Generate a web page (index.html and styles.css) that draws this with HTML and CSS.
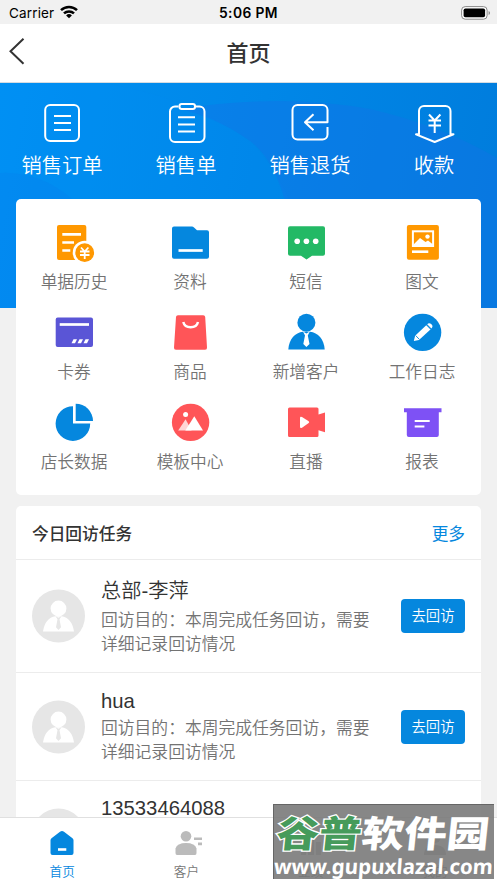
FILE: index.html
```html
<!DOCTYPE html>
<html lang="zh-CN">
<head>
<meta charset="utf-8">
<title>首页</title>
<link rel="stylesheet" href="styles.css">
</head>
<body>
<div class="screen">
  <div class="status">
    <div class="carrier">Carrier
      <svg width="18" height="14" viewBox="0 0 18 14" fill="none" stroke="#000" stroke-width="2.5"><path d="M1 5.2a11.6 11.6 0 0 1 16 0M4 8.4a7.2 7.2 0 0 1 10 0"/><path d="M9 13.3 6.1 10.5a4.2 4.2 0 0 1 5.8 0z" fill="#000" stroke="none"/></svg>
    </div>
    <div class="clock">5:06 PM</div>
    <svg class="battery" width="30" height="14" viewBox="0 0 30 14"><rect x=".6" y=".6" width="25.5" height="12.6" rx="3.6" fill="#fff" stroke="#888"/><rect x="2.6" y="2.5" width="21.5" height="8.8" rx="1.8"/><path d="M27.6 5v4q1.4-.5 1.400-2t-1.400-2" fill="#888"/></svg>
  </div>
  <header class="nav">
    <svg class="back" width="18" height="28" viewBox="0 0 18 28" fill="none" stroke="#333" stroke-width="2"><path d="M15.500 1.800 2.500 14.300 15.500 26.800"/></svg>
    <h1>首页</h1>
  </header>
  <main class="content">
    <section class="hero">
      <svg class="waves" width="497" height="225" viewBox="0 0 497 225">
        <path d="M100 0Q180 10 250 58 280 90 292 125V225H0V0z" fill="#008df5" opacity=".15"/>
        <path d="M180 26Q280 10 370 26 440 42 497 75V225H300Q294 90 250 58 218 35 180 26z" fill="#1672e8" opacity=".38"/>
        <path d="M0 90Q40 88 72 116V225H0z" fill="#087fee" opacity=".28"/>
      </svg>
      <a class="quick"><svg width="44" height="44" viewBox="0 0 44 44"><rect x="5.200" y="5" width="33.800" height="36" rx="5"/><path d="M14 16h17M14 23h17M14 30h17"/></svg><span>销售订单</span></a>
      <a class="quick"><svg width="44" height="44" viewBox="0 0 44 44"><path d="M14.500 6.500H11a5 5 0 0 0-5 5V37a5 5 0 0 0 5 5h24.500a5 5 0 0 0 5-5V11.500a5 5 0 0 0-5-5H31"/><rect x="15.500" y="4" width="15.500" height="5" rx="2.200"/><path d="M14 17.300h17M14 24.500h17M14 31.500h17"/></svg><span>销售单</span></a>
      <a class="quick"><svg width="44" height="44" viewBox="0 0 44 44"><path d="M39.500 27v7.500a5 5 0 0 1-5 5H9.500a5 5 0 0 1-5-5V10a5 5 0 0 1 5-5h25a5 5 0 0 1 5 5v12.300H17M25.500 14.300 17 22.300l8.500 8"/></svg><span>销售退货</span></a>
      <a class="quick"><svg width="44" height="44" viewBox="0 0 44 44"><path d="M4 34.300h3V11a5 5 0 0 1 5-5h21.500a5 5 0 0 1 5 5v23.300h3L22.700 42z"/><path d="m17 14.500 5.700 6 5.700-6M16.500 20.500H29M16.500 25.500H29M22.700 20.500V33"/></svg><span>收款</span></a>
    </section>

    <section class="card apps">
      <a class="app"><svg width="40" height="40" viewBox="0 0 40 40"><rect x="3" y="2" width="29.300" height="35" rx="2" fill="#ff9800"/><path d="M8.300 11.300H27M8.300 19.500H20M8.300 27.500h8" stroke="#fff" stroke-width="2.700"/><circle cx="30.700" cy="29.700" r="12" fill="#fff"/><circle cx="30.700" cy="29.700" r="9.400" fill="#ff9800"/><path d="m27 24.500 3.700 4 3.700-4M26 28.500h9.500M26 32h9.500M30.700 28.500V36" stroke="#fff" stroke-width="1.800" fill="none"/></svg><span>单据历史</span></a>
      <a class="app"><svg width="40" height="40" viewBox="0 0 40 40"><path d="M4 3.400h18q1 0 2 1l3 2.900h10a2 2 0 0 1 2 2v24.400a2 2 0 0 1-2 2H4a2 2 0 0 1-2-2V5.400a2 2 0 0 1 2-2" fill="#0587de"/><path d="M8.500 27.500h24.200" stroke="#fff" stroke-width="2.700"/></svg><span>资料</span></a>
      <a class="app"><svg width="40" height="40" viewBox="0 0 40 40"><path d="M4 3.300h33a2 2 0 0 1 2 2v25.400a2 2 0 0 1-2 2H26l-5.500 3.800-5.500-3.800H4a2 2 0 0 1-2-2V5.300a2 2 0 0 1 2-2" fill="#23b965"/><g fill="#fff"><circle cx="11.200" cy="18.200" r="2.800"/><circle cx="20.400" cy="18.200" r="2.800"/><circle cx="29.700" cy="18.200" r="2.800"/></g></svg><span>短信</span></a>
      <a class="app"><svg width="40" height="40" viewBox="0 0 40 40"><rect x="4.900" y="2" width="32" height="34.800" rx="2" fill="#ff9800"/><rect x="10.900" y="8.300" width="20.200" height="14.700" fill="none" stroke="#fff" stroke-width="2"/><path d="m11 22 7-7 5.500 4 2.500-1.500 5 4v2H11z" fill="#fff"/><circle cx="25.500" cy="13.600" r="2.200" fill="#fff"/><path d="M10 28.700h16.300" stroke="#fff" stroke-width="2.600"/></svg><span>图文</span></a>
      <a class="app"><svg width="40" height="40" viewBox="0 0 40 40"><rect x="1.700" y="4.600" width="37.300" height="29.400" rx="2" fill="#5a55d6"/><path d="M5.700 11.500H35" stroke="#fff" stroke-width="2.700"/><path d="M19.500 26.200h3.500l-2 4h-3.500zM25.500 26.200H29l-2 4h-3.500zM31.500 26.200H35l-2 4h-3.500z" fill="#fff"/></svg><span>卡券</span></a>
      <a class="app"><svg width="40" height="40" viewBox="0 0 40 40"><path d="M8 2.200h25.200a2 2 0 0 1 2 1.800L37 34.500a2 2 0 0 1-2 2.200H6a2 2 0 0 1-2-2.200L6 4a2 2 0 0 1 2-1.800" fill="#ff5558"/><path d="M13.300 9c1.700 7 13 7 14.700 0" fill="none" stroke="#fff" stroke-width="2.500"/></svg><span>商品</span></a>
      <a class="app"><svg width="40" height="40" viewBox="0 0 40 40"><g fill="#0587de"><circle cx="20.400" cy="9.700" r="9"/><path d="M2.300 36.500C3 26 9 19.600 17 18.700h7c8 .9 14 7.300 14.700 17.800z"/></g><path d="m17 18.500 3.400 1.900 3.400-1.900-2 4L23.500 31l-3.100 3-3.100-3L19 22.500z" fill="#fff"/></svg><span>新增客户</span></a>
      <a class="app"><svg width="40" height="40" viewBox="0 0 40 40"><circle cx="20.600" cy="19.400" r="18.700" fill="#0587de"/><g fill="#fff"><path d="m11.800 28 1.300-5.200L24.500 12l4.200 4.200L17 27z"/><path d="M25.200 11.200q2-2 4.200.1t0 4.100z"/></g><path d="m13.600 22.500 3.800 3.900M24 11.500l5 5" stroke="#0587de" stroke-width=".9"/></svg><span>工作日志</span></a>
      <a class="app"><svg width="40" height="40" viewBox="0 0 40 40" fill="#0587de"><path d="M19 3.300v17.200h17.200A17.300 17.300 0 1 1 19 3.300"/><path d="M21.700.7V18H39A17.300 17.300 0 0 0 21.700.7"/></svg><span>店长数据</span></a>
      <a class="app"><svg width="40" height="40" viewBox="0 0 40 40"><circle cx="20.600" cy="19.400" r="18.700" fill="#ff5558"/><path d="m8.200 27.500 7.400-11.200 6 11.200z" fill="#ffd5d6"/><path d="m15.300 27.500 9-14.200L33 27.500z" fill="#fff"/><circle cx="15.600" cy="11.400" r="2.500" fill="#fff"/></svg><span>模板中心</span></a>
      <a class="app"><svg width="40" height="40" viewBox="0 0 40 40"><path d="M3.500 4.500H31a1.500 1.500 0 0 1 1.500 1.500v5.500L39 9.500v19.700l-6.500-2v5.300A1.500 1.500 0 0 1 31 34H3.500A1.500 1.500 0 0 1 2 32.500V6a1.500 1.500 0 0 1 1.500-1.500" fill="#ff5558"/><path d="M14 15q0-2 2-1l6.700 4.300q1 .9 0 1.800L16 24.700q-2 1-2-1z" fill="#fff"/></svg><span>直播</span></a>
      <a class="app"><svg width="40" height="40" viewBox="0 0 40 40"><path d="M2 5.200h37.500v4H36.800V32a2 2 0 0 1-2 2h-28a2 2 0 0 1-2-2V9.200H2z" fill="#7e51f5"/><path d="M12.700 18h15M12.700 23.500h9.700" stroke="#fff" stroke-width="2"/></svg><span>报表</span></a>
    </section>

    <section class="card tasks">
      <div class="tasks-head"><h2>今日回访任务</h2><a>更多</a></div>
      <div class="task first">
        <svg class="avatar" width="54" height="54" viewBox="0 0 54 54"><circle cx="27.500" cy="27" r="26.500" fill="#e6e6e6"/><circle cx="27.500" cy="19.500" r="7.900" fill="#fff"/><path d="M12 42.500Q14 29 24.500 27.300h6Q41 29 43 42.500z" fill="#fff"/><path d="m24.500 27.300 3 1.500 3-1.500-2 3 1.500 8L27.500 41 25 38.300l1.500-8z" fill="#e6e6e6"/></svg>
        <div class="info"><h3>总部-李萍</h3><p>回访目的：本周完成任务回访，需要详细记录回访情况</p></div>
        <a class="btn">去回访</a>
      </div>
      <div class="task">
        <svg class="avatar" width="54" height="54" viewBox="0 0 54 54"><circle cx="27.500" cy="27" r="26.500" fill="#e6e6e6"/><circle cx="27.500" cy="19.500" r="7.900" fill="#fff"/><path d="M12 42.500Q14 29 24.500 27.300h6Q41 29 43 42.500z" fill="#fff"/><path d="m24.500 27.300 3 1.500 3-1.500-2 3 1.500 8L27.500 41 25 38.300l1.500-8z" fill="#e6e6e6"/></svg>
        <div class="info"><h3>hua</h3><p>回访目的：本周完成任务回访，需要详细记录回访情况</p></div>
        <a class="btn">去回访</a>
      </div>
      <div class="task last">
        <svg class="avatar" width="54" height="54" viewBox="0 0 54 54"><circle cx="27.500" cy="27" r="26.500" fill="#e6e6e6"/></svg>
        <div class="info"><h3>13533464088</h3></div>
      </div>
    </section>
  </main>

  <nav class="tabs">
    <a class="tab active"><svg width="28" height="28" viewBox="0 0 28 28"><path d="M14 1q1 0 2 .8l8.500 6.500q1 .8 1 2V23a2 2 0 0 1-2 2h-19a2 2 0 0 1-2-2V10.300q0-1.200 1-2L12 1.800Q13 1 14 1" fill="#0587de"/><path d="M10 19.500h8.300" stroke="#fff" stroke-width="2.600"/></svg><span>首页</span></a>
    <a class="tab"><svg width="28" height="28" viewBox="0 0 28 28" fill="#bbb"><circle cx="14" cy="6.300" r="5.300"/><path d="M3.500 18.500Q5 13 14 13t10.500 5.500V23q0 2-1.500 2H5q-1.500 0-1.500-2z"/><path d="M22 7.500h8v2.600h-8zM26 12.600h4v2.600h-4z"/></svg><span>客户</span></a>
    <a class="tab"><svg width="28" height="28" viewBox="0 0 28 28" fill="#bbb"><path d="M4 9h5v16H4zM11 3h6v22h-6zM19 12h5v13h-5z"/></svg><span>业绩</span></a>
    <a class="tab"><svg width="28" height="28" viewBox="0 0 28 28" fill="#bbb"><circle cx="14" cy="7" r="6"/><path d="M3 25q0-10 11-10t11 10z"/></svg><span>我的</span></a>
  </nav>

  <div class="mark">
    <div class="mark-name"><span class="green">谷普</span><span>软件园</span></div>
    <div class="mark-url">www.gupuxlazal.com</div>
  </div>
</div>
</body>
</html>
```
FILE: styles.css
```css
* { box-sizing: border-box; }
body {
  margin: 0;
  font-family: "Liberation Sans", "Noto Sans CJK SC", sans-serif;
  font-weight: 350;
  color: #333;
}
h1, h2, h3, p { margin: 0; font-weight: inherit; }
svg { display: block; flex: none; overflow: visible; }

.screen {
  position: relative;
  width: 497px;
  height: 883px;
  display: flex;
  flex-direction: column;
  overflow: hidden;
  background: #f1f1f1;
}

.status {
  height: 24px;
  flex: none;
  display: grid;
  grid-template-columns: 1fr auto 1fr;
  align-items: center;
  padding: 2px 6px 0 9px;
  font-family: Inter, sans-serif;
  font-size: 13.5px;
  font-weight: 400;
  color: #000;
}
.carrier { display: flex; align-items: center; gap: 6px; letter-spacing: .15px; }
.carrier svg { margin-top: -2px; }
.clock { margin-right: 3px; font-weight: 600; font-size: 13.8px; letter-spacing: .4px; }
.battery { justify-self: end; margin-top: -1px; }

.nav {
  height: 59px;
  flex: none;
  display: grid;
  grid-template-columns: 1fr auto 1fr;
  align-items: center;
  padding: 0 8px;
  background: #fff;
  border-bottom: 1px solid #d5dce2;
}
.back { margin-top: -4px; }
.nav h1 { padding-top: 2px; font-size: 22px; line-height: 32px; font-weight: 500; }

.content { flex: 1; min-height: 0; overflow: hidden; }

.hero {
  position: relative;
  height: 225px;
  display: grid;
  grid-template-columns: repeat(4, 124px);
  align-items: start;
  padding-top: 17px;
  background: linear-gradient(100deg, #0091f3, #0087e8 50%, #007cdc);
}
.waves { position: absolute; inset: 0; }
.quick {
  position: relative;
  display: flex;
  flex-direction: column;
  align-items: center;
  gap: 7px;
  color: #fff;
  font-size: 20.3px;
  line-height: 30px;
}
.quick svg { fill: none; stroke: #fff; stroke-width: 2; stroke-linejoin: round; }

.card {
  position: relative;
  margin: 0 16px;
  background: #fff;
  border-radius: 5px;
}
.apps {
  height: 296px;
  margin-top: -109px;
  padding-top: 24px;
  display: grid;
  grid-template-columns: repeat(4, 116px);
  grid-auto-rows: 90px;
}
.app {
  display: flex;
  flex-direction: column;
  align-items: center;
  gap: 8px;
  font-size: 16.7px;
  line-height: 24px;
  color: #737373;
}

.tasks { margin-top: 11px; height: 420px; }
.tasks-head {
  height: 54px;
  display: flex;
  align-items: center;
  justify-content: space-between;
  padding: 0 16px;
  border-bottom: 1px solid #ececec;
  font-size: 16.7px;
}
.tasks-head h2 { font-size: 16.7px; font-weight: 500; }
.tasks-head a { font-weight: 400; color: #0587de; }
.task {
  height: 108px;
  display: flex;
  align-items: center;
  padding: 0 16px 0 15px;
  border-bottom: 1px solid #ececec;
}
.task.first { height: 113px; }
.info { width: 272px; margin-left: 16px; }
.info h3 { padding-bottom: 4px; font-size: 20.3px; line-height: 24px; }
.info p { font-size: 16.8px; line-height: 24px; color: #737373; }
.first .info h3 { padding: 0 0 2px; line-height: 32px; }
.btn {
  width: 64px;
  height: 34px;
  margin-left: auto;
  border-radius: 4px;
  background: #0587de;
  color: #fff;
  font-size: 14.3px;
  line-height: 34px;
  text-align: center;
}
.task.last { align-items: flex-start; padding-top: 15px; }
.last .avatar { margin-top: 12px; }

.tabs {
  flex: none;
  height: 66px;
  display: grid;
  grid-template-columns: repeat(4, 1fr);
  border-top: 1px solid #e0e0e0;
  background: #fff;
}
.tab {
  display: flex;
  flex-direction: column;
  align-items: center;
  padding-top: 12px;
  gap: 5px;
  font-size: 12.6px;
  line-height: 18px;
  color: #777;
}
.tab.active { color: #0587de; }

.mark {
  position: absolute;
  left: 273px;
  top: 804px;
  width: 221px;
  height: 75px;
  border-top: 1px solid #666;
  border-left: 1px solid #666;
  background: rgba(118, 118, 118, .88);
  color: #fff;
  white-space: nowrap;
}
.mark-name {
  display: flex;
  height: 49px;
  padding: 3px 0 0 3px;
  align-items: center;
  font-size: 42.5px;
  line-height: 49px;
  font-weight: 900;
  transform: translateY(3px) skewX(-6deg) scaleY(.86);
}
.mark-name .green { color: #469b5b; -webkit-text-stroke: 3px #fff; paint-order: stroke fill; }
.mark-url {
  font-family: "Noto Sans", sans-serif;
  font-size: 20.6px;
  line-height: 24px;
  font-weight: 700;
  transform: skewX(-4deg);
}
```
